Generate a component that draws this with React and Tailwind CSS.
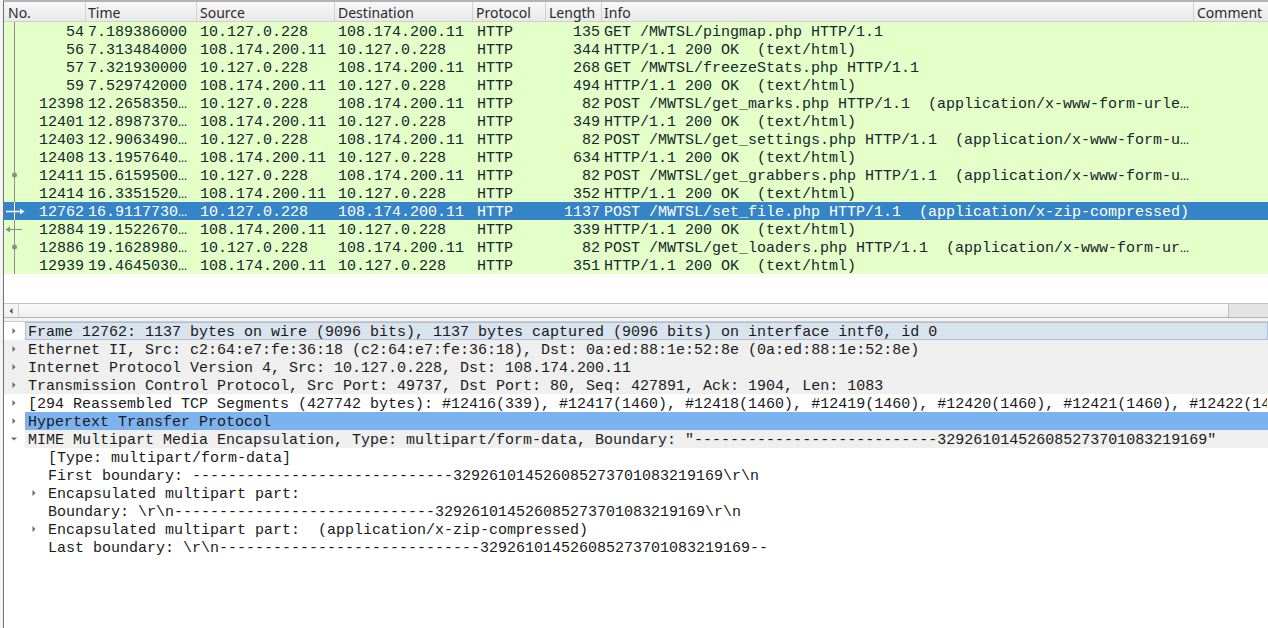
import React from 'react'

const cols = [
  { key: 'no', label: 'No.', w: 'w-[82px]', head: 'pl-[4px]', cell: 'text-right pr-[2px]' },
  { key: 'time', label: 'Time', w: 'w-[111px]', head: 'pl-[2px]', cell: 'pl-[2px]' },
  { key: 'src', label: 'Source', w: 'w-[138px]', head: 'pl-[3px]', cell: 'pl-[3px]' },
  { key: 'dst', label: 'Destination', w: 'w-[138px]', head: 'pl-[3px]', cell: 'pl-[3px]' },
  { key: 'proto', label: 'Protocol', w: 'w-[73px]', head: 'pl-[3px]', cell: 'pl-[4px]' },
  { key: 'len', label: 'Length', w: 'w-[56px]', head: 'pl-[3px]', cell: 'text-right pr-[2px]' },
  { key: 'info', label: 'Info', w: 'w-[592px]', head: 'pl-[2px]', cell: 'pl-[2px]' },
  { key: 'comment', label: 'Comment', w: 'flex-1', head: 'pl-[3px]', cell: '' },
]

const A = '10.127.0.228'
const B = '108.174.200.11'

const packets = [
  ['54', '7.189386000', A, B, '135', 'GET /MWTSL/pingmap.php HTTP/1.1'],
  ['56', '7.313484000', B, A, '344', 'HTTP/1.1 200 OK  (text/html)'],
  ['57', '7.321930000', A, B, '268', 'GET /MWTSL/freezeStats.php HTTP/1.1'],
  ['59', '7.529742000', B, A, '494', 'HTTP/1.1 200 OK  (text/html)'],
  ['12398', '12.2658350…', A, B, '82', 'POST /MWTSL/get_marks.php HTTP/1.1  (application/x-www-form-urle…'],
  ['12401', '12.8987370…', B, A, '349', 'HTTP/1.1 200 OK  (text/html)'],
  ['12403', '12.9063490…', A, B, '82', 'POST /MWTSL/get_settings.php HTTP/1.1  (application/x-www-form-u…'],
  ['12408', '13.1957640…', B, A, '634', 'HTTP/1.1 200 OK  (text/html)'],
  ['12411', '15.6159500…', A, B, '82', 'POST /MWTSL/get_grabbers.php HTTP/1.1  (application/x-www-form-u…', 'dot'],
  ['12414', '16.3351520…', B, A, '352', 'HTTP/1.1 200 OK  (text/html)'],
  ['12762', '16.9117730…', A, B, '1137', 'POST /MWTSL/set_file.php HTTP/1.1  (application/x-zip-compressed)', 'req'],
  ['12884', '19.1522670…', B, A, '339', 'HTTP/1.1 200 OK  (text/html)', 'resp'],
  ['12886', '19.1628980…', A, B, '82', 'POST /MWTSL/get_loaders.php HTTP/1.1  (application/x-www-form-ur…', 'dot'],
  ['12939', '19.4645030…', B, A, '351', 'HTTP/1.1 200 OK  (text/html)'],
]

const dashes = '-'.repeat(27)
const boundary = dashes + '329261014526085273701083219169'

const details = [
  { lvl: 0, tri: 'right', bg: 'frame', text: 'Frame 12762: 1137 bytes on wire (9096 bits), 1137 bytes captured (9096 bits) on interface intf0, id 0' },
  { lvl: 0, tri: 'right', bg: 'gray', text: 'Ethernet II, Src: c2:64:e7:fe:36:18 (c2:64:e7:fe:36:18), Dst: 0a:ed:88:1e:52:8e (0a:ed:88:1e:52:8e)' },
  { lvl: 0, tri: 'right', bg: 'gray', text: 'Internet Protocol Version 4, Src: 10.127.0.228, Dst: 108.174.200.11' },
  { lvl: 0, tri: 'right', bg: 'gray', text: 'Transmission Control Protocol, Src Port: 49737, Dst Port: 80, Seq: 427891, Ack: 1904, Len: 1083' },
  { lvl: 0, tri: 'right', text: '[294 Reassembled TCP Segments (427742 bytes): #12416(339), #12417(1460), #12418(1460), #12419(1460), #12420(1460), #12421(1460), #12422(14' },
  { lvl: 0, tri: 'right', bg: 'sel', text: 'Hypertext Transfer Protocol' },
  { lvl: 0, tri: 'down', bg: 'mime', text: 'MIME Multipart Media Encapsulation, Type: multipart/form-data, Boundary: "' + boundary + '"' },
  { lvl: 1, text: '[Type: multipart/form-data]' },
  { lvl: 1, text: 'First boundary: --' + boundary + '\\r\\n' },
  { lvl: 1, tri: 'right', text: 'Encapsulated multipart part: ' },
  { lvl: 1, text: 'Boundary: \\r\\n--' + boundary + '\\r\\n' },
  { lvl: 1, tri: 'right', text: 'Encapsulated multipart part:  (application/x-zip-compressed)' },
  { lvl: 1, text: 'Last boundary: \\r\\n--' + boundary + '--' },
]

function Mark({ kind, selected }) {
  const c = selected ? '#ffffff' : '#8c8c8c'
  return (
    <svg width="22" height="18" className="absolute left-0 top-0">
      <line x1="10.5" y1="0" x2="10.5" y2="18" stroke={c} strokeWidth="1" />
      {kind === 'dot' && <circle cx="10.5" cy="9" r="2.5" fill={c} />}
      {kind === 'req' && (
        <>
          <line x1="2" y1="9.5" x2="18" y2="9.5" stroke={c} strokeWidth="1.5" />
          <path d="M16 6.5 L20.5 9.5 L16 12.5 Z" fill={c} />
        </>
      )}
      {kind === 'resp' && (
        <>
          <line x1="4" y1="9.5" x2="18" y2="9.5" stroke={c} strokeWidth="1" />
          <path d="M6 6.5 L1.5 9.5 L6 12.5 Z" fill={c} />
        </>
      )}
    </svg>
  )
}

function Tri({ dir }) {
  if (dir === 'down') {
    return (
      <svg width="8" height="8" viewBox="0 0 8 8">
        <path d="M1 2.5 L7 2.5 L4 5.5 Z" fill="#6b6b6b" />
      </svg>
    )
  }
  return (
    <svg width="8" height="8" viewBox="0 0 8 8">
      <path d="M2.5 1 L5.5 4 L2.5 7 Z" fill="#6b6b6b" />
    </svg>
  )
}

function PacketRow({ p }) {
  const [no, time, src, dst, len, info, mark] = p
  const selected = mark === 'req'
  const vals = { no, time, src, dst, proto: 'HTTP', len, info, comment: '' }
  return (
    <div className={`flex h-[18px] ${selected ? 'bg-[#3584c8] text-white' : 'bg-[#e4ffc7] text-[#12272e]'}`}>
      {cols.map(c => (
        <div key={c.key} className={`${c.w} shrink-0 h-[18px] overflow-hidden whitespace-pre pt-[4px] leading-[14px] ${c.cell} ${c.key === 'no' ? 'relative' : ''}`}>
          {c.key === 'no' && <Mark kind={mark} selected={selected} />}
          {vals[c.key]}
        </div>
      ))}
    </div>
  )
}

function DetailRow({ d }) {
  let rowBg = ''
  let textBg = ''
  if (d.bg === 'gray') rowBg = 'bg-[#efefef]'
  if (d.bg === 'frame') textBg = 'bg-[#d9e3ed] border border-[#afc0d4]'
  if (d.bg === 'sel') textBg = 'bg-[#7cb2ef] border border-[#7cb2ef]'
  if (d.bg === 'mime') textBg = 'bg-[#efefef] border border-[#efefef]'
  const indent = d.lvl === 0 ? 'w-[21px]' : 'w-[41px]'
  return (
    <div className={`flex h-[18px] ${rowBg}`}>
      <div className={`${indent} shrink-0 flex items-center justify-end pr-[7px]`}>
        {d.tri && <Tri dir={d.tri} />}
      </div>
      <div className={`flex-1 h-[18px] overflow-hidden whitespace-pre pl-[2px] pt-[4px] leading-[12px] ${textBg || 'border border-transparent'}`}>
        {d.text}
      </div>
    </div>
  )
}

export default function App() {
  return (
    <div className="w-[1268px] h-[628px] overflow-hidden bg-[#f4f4f4] pl-[3px]">
      <div className="h-full flex flex-col bg-white border-l border-t-2 border-l-[#6e6e6e] border-t-[#b3b3b3]" style={{ fontFamily: '"Liberation Mono", monospace' }}>
        <div
          className="flex h-[20px] shrink-0 items-center bg-gradient-to-b from-[#f7f7f7] to-[#e9e9e9] border-b border-[#cfcfcf] text-[14px] text-[#2b2b2b]"
          style={{ fontFamily: '"Noto Sans", "Open Sans", sans-serif' }}
        >
          {cols.map((c, i) => (
            <div key={c.key} className={`${c.w} shrink-0 h-full flex items-center pt-[1px] ${c.head} ${i < cols.length - 1 ? 'border-r border-[#d2d2d2]' : ''}`}>
              {c.label}
            </div>
          ))}
        </div>
        <div className="h-[281px] shrink-0 text-[15px]">
          {packets.map(p => <PacketRow key={p[0]} p={p} />)}
        </div>
        <div className="h-[15px] shrink-0 flex border-t border-b border-t-[#c4c4c4] border-b-[#b4b4b4] bg-[#e3e3e3]">
          <div className="w-[15px] flex items-center justify-center border-r border-[#cfcfcf] bg-[#f3f3f3]">
            <svg width="6" height="8" viewBox="0 0 6 8">
              <path d="M4.5 1 L1.5 4 L4.5 7 Z" fill="#555" />
            </svg>
          </div>
          <div className="w-[1210px] bg-gradient-to-b from-[#fafafa] to-[#efefef] border-r border-[#bdbdbd]" />
        </div>
        <div className="h-[4px] shrink-0 bg-[#f2f2f2] border-b border-[#cbcbcb]" />
        <div className="flex-1 text-[15px] text-[#1a1a1a] bg-white">
          {details.map((d, i) => <DetailRow key={i} d={d} />)}
        </div>
      </div>
    </div>
  )
}
